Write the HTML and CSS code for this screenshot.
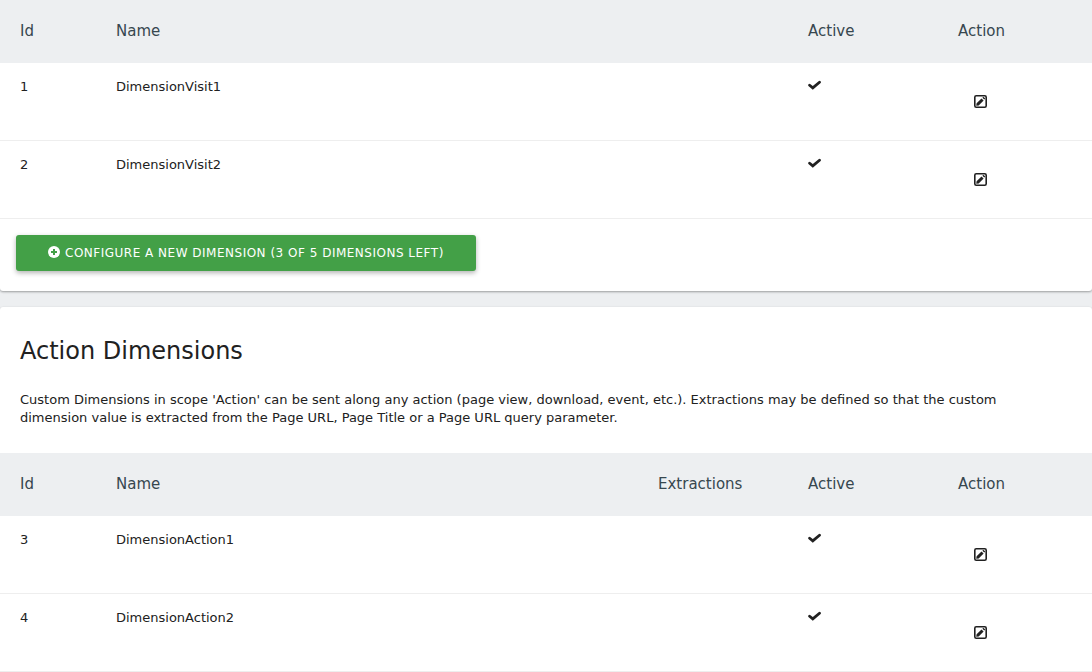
FILE: index.html
```
<!DOCTYPE html>
<html lang="en">
<head>
<meta charset="utf-8">
<meta name="viewport" content="width=device-width, initial-scale=1">
<title>Custom Dimensions</title>
<link rel="stylesheet" href="styles.css">
</head>
<body>
<svg class="sprite" aria-hidden="true">
  <symbol id="check" viewBox="0 0 13 10"><path d="M1.6 5.2 4.8 7.9 11.5 2.2" fill="none" stroke="currentColor" stroke-width="2.8" stroke-linecap="round"/></symbol>
  <symbol id="edit" viewBox="0 0 13 13"><rect x=".8" y=".8" width="11.4" height="11.4" rx="1.4" fill="none" stroke="currentColor" stroke-width="1.6"/><path d="M2.2 10.8 2.6 8.3 7.5 3.4 9.6 5.5 4.7 10.4zM8.4 2.8 9.1 2.1Q9.5 1.8 9.9 2.2L10.8 3.1Q11.2 3.5 10.9 3.9L10.2 4.6z" fill="currentColor"/></symbol>
  <symbol id="plus" viewBox="0 0 12 12"><circle cx="6" cy="6" r="6" fill="currentColor"/><path d="M6 3v6M3 6h6" class="plus-cross"/></symbol>
</svg>
<main>
  <section class="card">
    <table class="dimensions">
      <colgroup><col class="col-id"><col><col class="col-flag"><col class="col-action"></colgroup>
      <thead><tr><th scope="col">Id</th><th scope="col">Name</th><th scope="col">Active</th><th scope="col">Action</th></tr></thead>
      <tbody>
        <tr><td>1</td><td>DimensionVisit1</td><td><svg class="check" role="img" aria-label="Active"><use href="#check"/></svg></td><td><button type="button" class="edit" aria-label="Edit DimensionVisit1"><svg><use href="#edit"/></svg></button></td></tr>
        <tr><td>2</td><td>DimensionVisit2</td><td><svg class="check" role="img" aria-label="Active"><use href="#check"/></svg></td><td><button type="button" class="edit" aria-label="Edit DimensionVisit2"><svg><use href="#edit"/></svg></button></td></tr>
      </tbody>
    </table>
    <div class="card-actions">
      <button type="button" class="btn"><svg class="plus" aria-hidden="true"><use href="#plus"/></svg><span>Configure a new dimension (3 of 5 dimensions left)</span></button>
    </div>
  </section>
  <section class="card card-last">
    <h2>Action Dimensions</h2>
    <p>Custom Dimensions in scope 'Action' can be sent along any action (page view, download, event, etc.). Extractions may be defined so that the custom dimension value is extracted from the Page URL, Page Title or a Page URL query parameter.</p>
    <table class="dimensions">
      <colgroup><col class="col-id"><col><col class="col-flag"><col class="col-flag"><col class="col-action"></colgroup>
      <thead><tr><th scope="col">Id</th><th scope="col">Name</th><th scope="col">Extractions</th><th scope="col">Active</th><th scope="col">Action</th></tr></thead>
      <tbody>
        <tr><td>3</td><td>DimensionAction1</td><td></td><td><svg class="check" role="img" aria-label="Active"><use href="#check"/></svg></td><td><button type="button" class="edit" aria-label="Edit DimensionAction1"><svg><use href="#edit"/></svg></button></td></tr>
        <tr><td>4</td><td>DimensionAction2</td><td></td><td><svg class="check" role="img" aria-label="Active"><use href="#check"/></svg></td><td><button type="button" class="edit" aria-label="Edit DimensionAction2"><svg><use href="#edit"/></svg></button></td></tr>
      </tbody>
    </table>
  </section>
</main>
</body>
</html>
```
FILE: styles.css
```
* { box-sizing: border-box; }

body {
  margin: 0;
  background: #edeff1;
  color: #212121;
  font: 13px/18px "DejaVu Sans", sans-serif;
}

.sprite { display: none; }

main {
  display: flex;
  flex-direction: column;
  gap: 16px;
}

.card {
  background: #fff;
  border-radius: 3px;
  box-shadow: 0 1px 2px 0 rgba(0, 0, 0, .24), 0 1px 3px 0 rgba(0, 0, 0, .12);
}

.card-last { border-radius: 3px 3px 0 0; }

h2 {
  margin: 0;
  padding: 28px 20px 24px;
  font-size: 24px;
  line-height: 32px;
  font-weight: 400;
}

p {
  margin: 0;
  padding: 0 60px 26px 20px;
}

.dimensions {
  width: 100%;
  table-layout: fixed;
  border-collapse: separate;
  border-spacing: 0;
}

.col-id { width: 96px; }
.col-flag { width: 150px; }
.col-action { width: 154px; }

th {
  height: 63px;
  padding: 0 20px 2px;
  background: #edeff1;
  color: #37474f;
  font-size: 15px;
  font-weight: 400;
  text-align: left;
}

td {
  padding: 15px 20px;
  border-bottom: 1px solid #eee;
  vertical-align: top;
}

.check {
  display: block;
  width: 13px;
  height: 10px;
  margin-top: 2px;
}

.edit {
  display: flex;
  align-items: center;
  justify-content: center;
  width: 45px;
  height: 47px;
  padding: 0;
  border: 0;
  background: none;
  color: inherit;
}

.edit svg {
  width: 13px;
  height: 13px;
}

.card-actions { padding: 16px 16px 20px; }

.btn {
  display: flex;
  align-items: center;
  gap: 5px;
  height: 36px;
  padding: 0 32px;
  border: 0;
  border-radius: 3px;
  background: #43a047;
  box-shadow: 0 2px 5px 0 rgba(0, 0, 0, .3);
  color: #fff;
  font: 12px/36px "DejaVu Sans", sans-serif;
  letter-spacing: .5px;
  text-transform: uppercase;
}

.plus {
  width: 12px;
  height: 12px;
  margin-bottom: 2px;
}

.plus-cross {
  stroke: #43a047;
  stroke-width: 2;
}
```
